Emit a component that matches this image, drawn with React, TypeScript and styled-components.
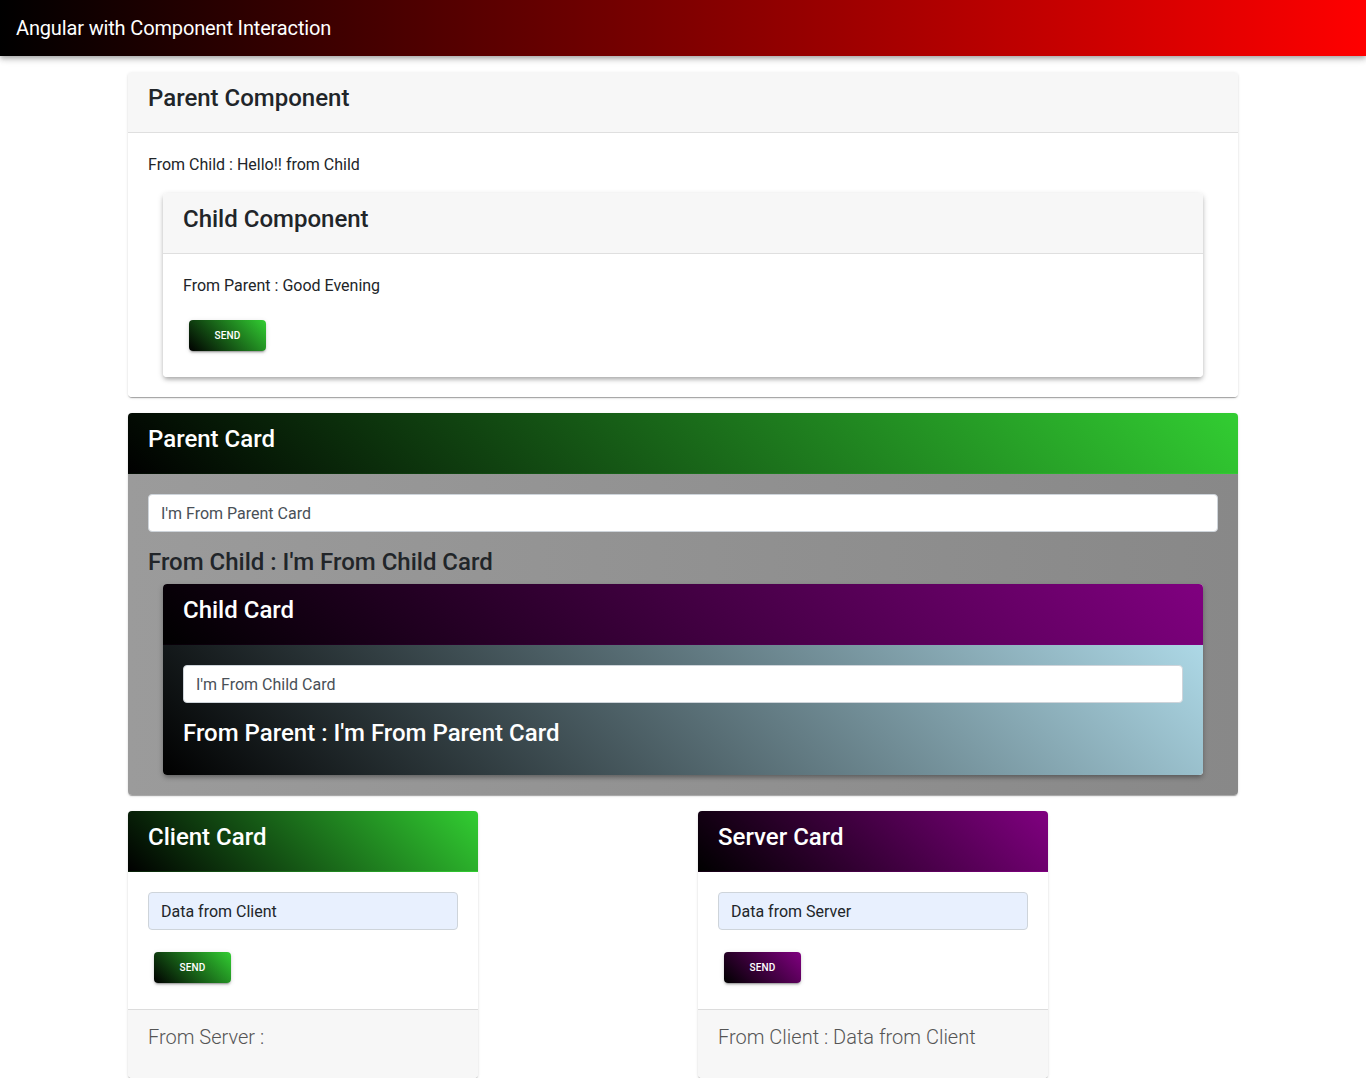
import React from "react";
import styled, { createGlobalStyle } from "styled-components";

const Global = createGlobalStyle`
  * { box-sizing: border-box; }
  body { margin: 0; font-family: Roboto, "Helvetica Neue", sans-serif; color: #212529; background: #fff; }
`;

const Toolbar = styled.header`
  height: 56px;
  display: flex;
  align-items: center;
  padding: 0 16px;
  background: linear-gradient(to right, #000, #f00);
  color: #fff;
  font-size: 20px;
  font-weight: 400;
  letter-spacing: -0.15px;
  box-shadow: 0 2px 4px -1px rgba(0,0,0,.2), 0 4px 5px 0 rgba(0,0,0,.14), 0 1px 10px 0 rgba(0,0,0,.12);
`;

const Container = styled.main`
  width: 1110px;
  margin: 16px auto 0;
  display: flex;
  flex-direction: column;
  gap: 16px;
`;

type Tone = "plain" | "green" | "purple";

const headerBg: Record<Tone, string> = {
  plain: "#f7f7f7",
  green: "linear-gradient(45deg, #000, #32cd32)",
  purple: "linear-gradient(45deg, #000, #800080)",
};

const Card = styled.section<{ $width?: string; $shadow?: boolean }>`
  width: ${(p) => p.$width || "auto"};
  background: #fff;
  border-radius: 4px;
  overflow: hidden;
  box-shadow: ${(p) =>
    p.$shadow
      ? "0 3px 4px -1px rgba(0,0,0,.25), 0 2px 6px 0 rgba(0,0,0,.16)"
      : "0 2px 1px -1px rgba(0,0,0,.2), 0 1px 1px 0 rgba(0,0,0,.14), 0 1px 3px 0 rgba(0,0,0,.12)"};
`;

const CardHeader = styled.div<{ $tone: Tone }>`
  height: 61px;
  padding: 12px 20px;
  background: ${(p) => headerBg[p.$tone]};
  border-bottom: 1px solid ${(p) => (p.$tone === "plain" ? "#dfdfdf" : "transparent")};
  color: ${(p) => (p.$tone === "plain" ? "#212529" : "#fff")};
`;

const Title = styled.h4`
  margin: 0;
  font-size: 24px;
  line-height: 29px;
  font-weight: 500;
`;

const CardBody = styled.div<{ $bg?: string }>`
  display: flex;
  flex-direction: column;
  padding: 20px;
  background: ${(p) => p.$bg || "#fff"};
`;

const Nested = styled.div`
  margin: 0 15px;
`;

const Text = styled.p`
  margin: 0 0 16px;
  font-size: 16px;
  line-height: 24px;
`;

const Heading = styled.div<{ $light?: boolean }>`
  margin: 16px 0 8px;
  font-size: 24px;
  line-height: 28px;
  font-weight: 500;
  color: ${(p) => (p.$light ? "#fff" : "#212529")};
`;

const Input = styled.input<{ $filled?: boolean }>`
  display: block;
  width: 100%;
  height: 38px;
  padding: 6px 12px;
  font-family: Roboto, sans-serif;
  font-size: 16px;
  color: ${(p) => (p.$filled ? "#212529" : "#495057")};
  background: ${(p) => (p.$filled ? "#e8f0fe" : "#fff")};
  border: 1px solid #ced4da;
  border-radius: 4px;
  outline: none;
`;

const SendButton = styled.button<{ $tone: Tone; $gap?: number }>`
  align-self: flex-start;
  margin: ${(p) => 6 + (p.$gap || 0)}px 6px 6px;
  width: 77px;
  height: 31px;
  border: none;
  border-radius: 4px;
  background: ${(p) =>
    p.$tone === "purple"
      ? "linear-gradient(45deg, #000, #800080)"
      : "linear-gradient(45deg, #000, #32cd32)"};
  color: #fff;
  font-family: Roboto, sans-serif;
  font-size: 10px;
  font-weight: 500;
  letter-spacing: 0.2px;
  box-shadow: 0 3px 1px -2px rgba(0,0,0,.2), 0 2px 2px 0 rgba(0,0,0,.14), 0 1px 5px 0 rgba(0,0,0,.12);
`;

const Footer = styled.div`
  padding: 12px 20px 26px;
  background: #f7f7f7;
  border-top: 1px solid #dcdcdc;
  font-size: 20px;
  font-weight: 300;
  line-height: 30px;
  color: #555;
`;

const Row = styled.div`
  display: grid;
  grid-template-columns: 1fr 1fr;
  column-gap: 30px;
`;

export default function App() {
  return (
    <>
      <Global />
      <Toolbar>Angular with Component Interaction</Toolbar>
      <Container>
        <Card>
          <CardHeader $tone="plain"><Title>Parent Component</Title></CardHeader>
          <CardBody>
            <Text>From Child : Hello!! from Child</Text>
            <Nested>
              <Card $shadow>
                <CardHeader $tone="plain"><Title>Child Component</Title></CardHeader>
                <CardBody>
                  <Text>From Parent : Good Evening</Text>
                  <SendButton $tone="green">SEND</SendButton>
                </CardBody>
              </Card>
            </Nested>
          </CardBody>
        </Card>

        <Card>
          <CardHeader $tone="green"><Title>Parent Card</Title></CardHeader>
          <CardBody $bg="linear-gradient(to right, #9b9b9b, #888)">
            <Input readOnly value="I'm From Parent Card" />
            <Heading>From Child : I'm From Child Card</Heading>
            <Nested>
              <Card $shadow>
                <CardHeader $tone="purple"><Title>Child Card</Title></CardHeader>
                <CardBody $bg="linear-gradient(45deg, #000, #add8e6)">
                  <Input readOnly value="I'm From Child Card" />
                  <Heading $light>From Parent : I'm From Parent Card</Heading>
                </CardBody>
              </Card>
            </Nested>
          </CardBody>
        </Card>

        <Row>
          <Card $width="350px">
            <CardHeader $tone="green"><Title>Client Card</Title></CardHeader>
            <CardBody>
              <Input $filled readOnly value="Data from Client" />
              <SendButton $tone="green" $gap={16}>SEND</SendButton>
            </CardBody>
            <Footer>From Server :</Footer>
          </Card>
          <Card $width="350px">
            <CardHeader $tone="purple"><Title>Server Card</Title></CardHeader>
            <CardBody>
              <Input $filled readOnly value="Data from Server" />
              <SendButton $tone="purple" $gap={16}>SEND</SendButton>
            </CardBody>
            <Footer>From Client : Data from Client</Footer>
          </Card>
        </Row>
      </Container>
    </>
  );
}
